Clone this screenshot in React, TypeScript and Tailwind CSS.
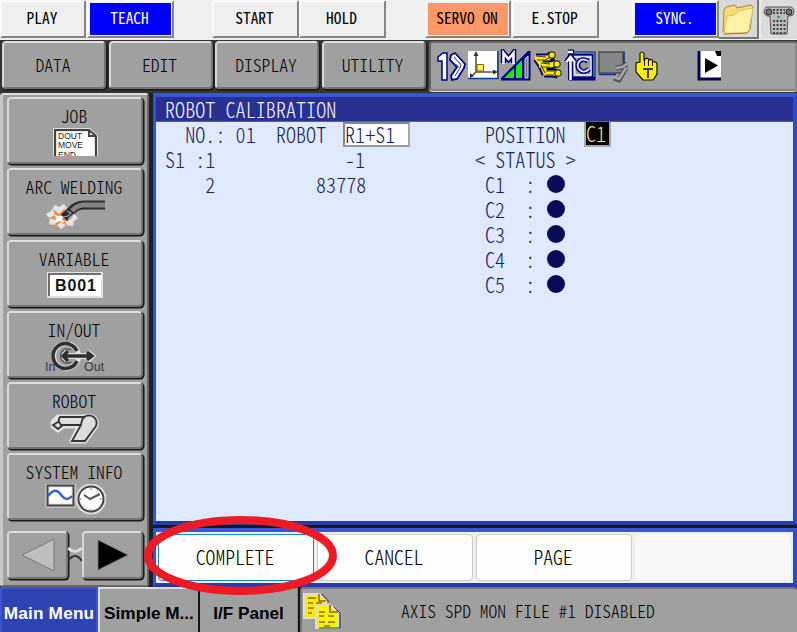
import type { ReactNode } from "react";

const MONO = "font-['Noto_Sans_CJK_JP',monospace] [font-feature-settings:'hwid'] whitespace-pre";

const BEVEL =
  "bg-[#a0a0a0] rounded-[4px] border-2 border-t-[#dedede] border-l-[#d8d8d8] border-r-[#747474] border-b-[#747474] shadow-[1px_1px_0_0.500px_#181818]";

function TopButton({ className, face, children }: { className: string; face?: string; children: ReactNode }) {
  return (
    <div className={`h-[38px] shrink-0 border-t-2 border-l-2 border-r-2 border-b-2 border-t-[#fafafa] border-l-[#fafafa] border-r-[#858585] border-b-[#858585] bg-[#efefef] p-px ${className}`}>
      <div className={`flex h-full items-center justify-center pr-[2px] pb-[2px] text-[15.4px] leading-none ${MONO} ${face ?? ""}`}>{children}</div>
    </div>
  );
}

function MenuButton({ label }: { label: string }) {
  return <div className={`flex h-[48px] w-[104px] shrink-0 items-center justify-center pr-[2px] pb-px text-[17.6px] leading-none ${MONO} font-light ${BEVEL}`}>{label}</div>;
}

function SideButton({ label, children }: { label: string; children: ReactNode }) {
  return (
    <div className={`flex h-[67px] w-[136px] shrink-0 flex-col items-center pt-[6px] ${BEVEL}`}>
      <div className={`mr-[2px] h-[23px] text-[17.6px] leading-[22px] font-light ${MONO}`}>{label}</div>
      <svg width="62" height="31" viewBox="0 0 62 31" fill="none">{children}</svg>
    </div>
  );
}

function SoftKey({ label, active }: { label: string; active?: boolean }) {
  return (
    <div className={`flex h-[47px] w-[156px] shrink-0 items-center justify-center rounded-[4px] border pr-[2px] pb-[2px] text-[19.6px] leading-none font-light ${MONO} ${
      active ? "border-[#1685d9] bg-[#fdfdfd]" : label ? "border-[#cbcbcb] bg-[#fdfdfd]" : "border-[#f4f4f4] bg-[#f8f8f8]"
    }`}><span className="block scale-y-[1.060]">{label}</span></div>
  );
}

function StatusIcons() {
  return (
    <svg width="290" height="34" viewBox="434 48 290 34" fill="none">
      {/* one-step cycle */}
      <path d="M438 56l5-4h4v27h-5V60h-4z" fill="#fff" stroke="#000090" strokeWidth="1.5" />
      <path d="M451 54l4-2 10 11-1 4-7 11-5 1-1-4 6-9-7-7z" fill="#fff" stroke="#000090" strokeWidth="1.8" />
      <path d="M454 56l7 8-1 3-5 8m0-12l4 3" stroke="#4050b0" strokeWidth="1.1" />
      {/* coordinate frame */}
      <path d="M468 50h29v27h-29z" fill="#fff" /><path d="M468 77.5h30V50" stroke="#003c90" strokeWidth="1.5" />
      <path d="M476 54v17h19M476 71l-4 4" stroke="#555" strokeWidth="1.6" />
      <path d="M476 50l2.5 5h-5zM498 71l-5-2.5v5zM470 77v-5l4 3z" fill="#333" />
      <path d="M477 63.5h6.5V70H477z" fill="#ffff50" stroke="#806000" />
      {/* manual speed */}
      <path d="M501 79.5V77l27-27h2.500v29.5z" fill="#000080" />
      <path d="M504 77l10-10v10zM516 65l6-6v18h-6z" fill="#0eef18" />
      <path d="M525 58l3-3v22h-3z" fill="#777" stroke="#ddd" />
      <path d="M503.500 62V52l5 6 5-6v10" stroke="#000080" strokeWidth="5.500" />
      <path d="M503.500 63V52l5 6 5-6v11" stroke="#fff" strokeWidth="2.5" />
      {/* manipulator group */}
      <path d="M536 57h12l4-3m-13 10h12l5-2m-12 10h9l5 1M537 57l5 7 4 9" stroke="#00007c" strokeWidth="9" strokeLinejoin="round" />
      <path d="M535 57h13l4-3m-13 10h12l5-2m-12 10h9l5 1M537 57l5 7 4 9" stroke="#ffe900" strokeWidth="5" strokeLinejoin="round" />
      <path d="M537 59h8l6-3m-10 10h9m-4 8h8m-13-10l4 8M536 55l10 1m-5 6l9 1m-4 7h8" stroke="#4a4400" strokeWidth="1.1" />
      <g fill="#ffe900" stroke="#35350a" strokeWidth="1.2"><circle cx="552" cy="54" r="3.200" /><circle cx="557" cy="63" r="3.2" /><circle cx="558" cy="72" r="3.2" /></g>
      {/* continuous cycle */}
      <path d="M571 52.500h22.500v25H571z" fill="#999" stroke="#000080" strokeWidth="4" />
      <path d="M570 52h24v24" stroke="#4c9aaa" strokeWidth="1.3" />
      <path d="M574 56h17v18h-16z" stroke="#eee" strokeWidth="1.3" />
      <path d="M570.500 79V58m-4 3l4-6 4 6M568 51h6" stroke="#000080" strokeWidth="5" />
      <path d="M570.500 79V58m-4 3l4-5 4 5M568 51h5" stroke="#fff" strokeWidth="2.5" />
      <path d="M588 60c-9-5-13 5-8 9 3 3 7 1 9-1" stroke="#000080" strokeWidth="5" />
      <path d="M588 60c-9-5-13 5-8 9 3 3 7 1 9-1" stroke="#dce8f4" strokeWidth="2" />
      {/* idle display */}
      <path d="M599 51h24v21h-24z" fill="#868686" stroke="#4d4d4d" strokeWidth="1.5" />
      <path d="M599 73.500h17m8-23v14" stroke="#00308a" strokeWidth="1.500" />
      <path d="M616 67l6-1 5-3m-1 4l-7 12-5-2" stroke="#555" strokeWidth="5" /><path d="M616 67l6-1 5-3m-1 4l-7 11-5-2" stroke="#aaa" strokeWidth="2.5" />
      {/* touch pointer */}
      <path d="M640 52.500q2-3 4 0V60l1-2q3-2 4 1 3-2 4 2 4-1 4 3v9l-4 6h-10l-7-8v-9l4-1z" fill="#ffef00" stroke="#111" strokeWidth="1.2" />
      <path d="M644.500 58v7m4-6v6m4-4v4" stroke="#111" /><path d="M643 68h10m-5 0v9" stroke="#403c80" strokeWidth="2" />
      {/* page advance */}
      <path d="M698 50h23v29h-23z" fill="#fff" /><path d="M699 50v28h22" stroke="#000050" strokeWidth="3" /><path d="M715 50h6v5h-4z" fill="#000" />
      <path d="M705 57l13 7.500-13 7.500z" fill="#000" />
    </svg>
  );
}

function Led() {
  return <span className="ml-px block size-[18px] rounded-full bg-[#080c58]" />;
}

/** One screen cell run, stretched to the terminal's tall glyph shape. */
function Cells({ className, children }: { className?: string; children?: ReactNode }) {
  return <span className={`block -translate-y-px scale-y-[1.070] ${className ?? ""}`}>{children}</span>;
}

export default function App() {
  return (
    <div className="relative flex h-[632px] w-[797px] flex-col overflow-hidden bg-[#202020] text-black">
      <header className="flex h-[40px] shrink-0 bg-[#efefef]">
        <TopButton className="w-[86px]">PLAY</TopButton>
        <TopButton className="ml-[1px] w-[87px]" face="bg-[#0000ff] text-white">TEACH</TopButton>
        <TopButton className="ml-[38px] w-[87px]">START</TopButton>
        <TopButton className="w-[87px]">HOLD</TopButton>
        <TopButton className="ml-[39px] w-[86px]" face="bg-[#ff9868]">SERVO ON</TopButton>
        <TopButton className="ml-[1px] w-[87px]">E.STOP</TopButton>
        <TopButton className="ml-[33px] w-[87px]" face="bg-[#0000ff] text-white">SYNC.</TopButton>
        <div className="flex h-[39px] w-[40px] items-center justify-center border-r-2 border-b-2 border-[#777] bg-[#d9d9d9]">
          <svg width="36" height="34" viewBox="0 0 36 34" fill="none">
            <path d="M3 30L4 8l2-3 9-2 2 3 14-3 2 2-3 23-3 3z" fill="#f5db78" stroke="#a98c40" />
            <path d="M4 31L7 14l8-1 3-4 15-3-4 22-2 3z" fill="#fff2a5" stroke="#dfbf5c" />
            <path d="M4 32l23-1 2-2" stroke="#9c7920" />
          </svg>
        </div>
        <div className="flex h-[39px] flex-1 items-center justify-center border-l-2 border-[#eee] bg-[#dcdcdc]">
          <svg width="32" height="32" viewBox="0 0 32 32" fill="none">
            <path d="M3 3h25q3 1 3 5t-4 4h-2l-1 18H8L7 12H4q-3-1-3-5z" fill="#bcbcbc" stroke="#555" />
            <circle cx="6" cy="8" r="3" fill="#777" stroke="#222" /><circle cx="26" cy="8" r="3" fill="#777" stroke="#222" />
            <path d="M10 6h12M10 9h12M10 17h13M10 21h13M10 25h13M10 29h13" stroke="#444" strokeWidth="2" strokeDasharray="2 1.5" />
            <path d="M14 13h3" stroke="#36a765" strokeWidth="2" />
          </svg>
        </div>
      </header>

      <nav className="flex h-[53px] shrink-0 gap-[2.500px] bg-[#343434] pt-[1px] pl-[2px]">
        <MenuButton label="DATA" /><MenuButton label="EDIT" /><MenuButton label="DISPLAY" /><MenuButton label="UTILITY" />
        <div className="ml-[1px] h-[50px] flex-1 rounded-[3px] border-2 border-t-[#666] border-l-[#666] border-r-[#888] border-b-[#858585] bg-[#a0a0a0] pt-[6px] pl-[3px] shadow-[0_1px_0_#ddd]"><StatusIcons /></div>
      </nav>

      <div className="flex h-[494px] shrink-0">
        <aside className="flex w-[149px] shrink-0 flex-col gap-[4.300px] rounded-[3px] border-t-2 border-l-3 border-r-2 border-b-2 border-t-[#dedede] border-l-[#c8c8c8] border-r-[#686868] border-b-[#686868] bg-[#a0a0a0] pt-[2px] pl-[4px]">
          <SideButton label="JOB">
            <path d="M11 28V2h33l8 6v20z" fill="#fff" />
            <path d="M11 28V2h34l7 6v20" stroke="#e0e0e0" strokeWidth="4" />
            <path d="M11 28V2h34l7 6v20M45 2v6h7" stroke="#444" strokeWidth="2" />
            <svg x="12" y="3" width="38" height="25" viewBox="12 3 38 25"><g fill="#222" className="font-['Liberation_Sans',sans-serif] text-[8.500px]"><text x="14" y="11">DOUT</text><text x="14" y="20">MOVE</text><text x="14" y="29.500">END</text></g></svg>
          </SideButton>
          <SideButton label="ARC WELDING">
            <path d="M11 6l4 2 5-3 3 4 6 1 1 5 4 4-4 3-1 5-7-1-5 4-4-4-8-1 1-5-4-5 5-3z" fill="#e6e6e6" stroke="#c8c8c8" />
            <path d="M9 10l6 5 6-6-1 7 9 3-8 2 2 6-6-4-6 5 1-7-7-2 6-3z" fill="#f58b40" />
            <path d="M11 16l4 1 5-1-2 4 3 4-5-2-5 2 1-4z" fill="#fff" />
            <path d="M20 19l6-6q6-7 14-7h21" stroke="#2c2c2c" strokeWidth="9" />
            <path d="M28 12q5-6 12-6h21" stroke="#848484" strokeWidth="5" />
            <path d="M19 18l5-1 3-3-4-2m1 8l6-5" stroke="#aaa" strokeWidth="1.200" />
          </SideButton>
          <SideButton label="VARIABLE">
            <path d="M4 2h54v24H4z" fill="#fff" stroke="#e4e4e4" strokeWidth="2" /><path d="M5 25V3h52" stroke="#444" strokeWidth="1.5" />
            <text x="11" y="19.500" textLength="41" fill="#151515" className="font-['Liberation_Sans',sans-serif] text-[16px] font-bold">B001</text>
          </SideButton>
          <SideButton label="IN/OUT">
            <circle cx="22" cy="14" r="12.500" stroke="#dedede" strokeWidth="5" />
            <path d="M20 14h28m-24-5l-5 5 5 5m19-9l5 4-5 5" stroke="#ddd" strokeWidth="6" />
            <path d="M33 9a12.500 12.500 0 1 0 0 10" stroke="#303030" strokeWidth="3.600" />
            <path d="M27 8a7 7 0 1 0 0 12" stroke="#555" strokeWidth="1.500" />
            <path d="M20 14h28m-24-5l-5 5 5 5m19-9l5 4-5 4" stroke="#303030" strokeWidth="3.400" />
            <g fill="#383838" className="font-['Liberation_Sans',sans-serif] text-[12.500px]"><text x="1" y="29">In</text><text x="40" y="29">Out</text></g>
          </SideButton>
          <SideButton label="ROBOT">
            <g stroke="#e2e2e2" strokeWidth="5" strokeLinejoin="round">
              <path d="M14 4h28v9H19l-5 4-5-4v-4z" /><path d="M39 6a7.500 7.500 0 0 1 13 7L41 28H28z" />
            </g>
            <path d="M14 9l-5 3 5 4 5-4M16 4h28v8H17q-4-4-1-8z" fill="#ddd" stroke="#333" strokeWidth="1.800" />
            <path d="M38 7a7.500 7.500 0 0 1 14 6L41 28H28l9-16z" fill="#dcdcdc" stroke="#333" strokeWidth="1.800" />
          </SideButton>
          <SideButton label="SYSTEM INFO">
            <path d="M3.500 1.500h26v20h-26z" fill="#fff" stroke="#ddd" strokeWidth="4" /><path d="M3.500 1.500h26v20h-26z" stroke="#444" strokeWidth="2" />
            <path d="M4 12c6-8 10-6 14 0q5 6 10 0" stroke="#2d60d4" strokeWidth="2.500" />
            <circle cx="47" cy="15" r="14" fill="#fff" stroke="#ddd" strokeWidth="3" /><circle cx="47" cy="15" r="12.500" stroke="#444" strokeWidth="2" />
            <path d="M40 11l6 4 10-5" stroke="#555" strokeWidth="2" /><path d="M47 4v2m0 19v2M36 15h2m18 0h2" stroke="#888" />
          </SideButton>
          <div className="mt-[6px] flex items-center">
            <div className={`flex h-[48px] w-[61px] items-center justify-center ${BEVEL}`}><svg width="34" height="36"><path d="M33 2v32L1 18z" fill="#bebebe" stroke="#747474" /></svg></div>
            <svg width="14" height="20" viewBox="0 0 14 20" fill="none"><path d="M0 3q7 7 14 0" stroke="#ddd" strokeWidth="3" /><path d="M0 16q7-10 14 0" stroke="#333" strokeWidth="2" /></svg>
            <div className={`flex h-[48px] w-[61px] items-center justify-center ${BEVEL}`}><svg width="32" height="34"><path d="M1 2v30l30-15z" fill="#000" stroke="#777" /></svg></div>
          </div>
        </aside>
        <main className="ml-[4px] flex flex-1 flex-col gap-[3px] bg-[#101c20]">
          <section className={`h-[432px] border-t-4 border-r-4 border-b-4 border-l-3 border-t-[#3855dc] border-l-[#3551de] border-r-[#3048cb] border-b-[#283ba4] bg-[#dfeaff] text-[20px] leading-[25px] font-light tracking-[0.080px] text-[#171d65] ${MONO}`}>
            <div className="h-[25px] border-b border-[#5660ba] bg-[#283092] pl-[9px] text-[#f3f5ff]"><Cells>ROBOT CALIBRATION</Cells></div>
            <div className="flex h-[25px]">
              <div className="w-[187px] pl-[9px]"><Cells>{"  NO.: 01  ROBOT"}</Cells></div>
              <div className="h-[25px] w-[67px] border-2 border-t-[#888] border-l-[#888] border-r-[#aaa] border-b-[#999] bg-white leading-[21px]"><Cells>R1+S1</Cells></div>
              <div className="w-[174px] pl-[75px]"><Cells>POSITION</Cells></div>
              <div className="h-[25px] w-[27px] border-r-2 border-b-2 border-l-2 border-[#aaa] bg-black leading-[24px] text-[#eee98e]"><Cells>C1</Cells></div>
            </div>
            <div className="flex h-[25px] pl-[9px]"><Cells className="w-[180px]">S1 :1</Cells><Cells className="w-[130px]">-1</Cells><Cells>{"< STATUS >"}</Cells></div>
            {["C1", "C2", "C3", "C4", "C5"].map((name, i) => (
              <div key={name} className="flex h-[25px] items-start pl-[9px]">
                <Cells className="w-[151px]">{i === 0 ? "    2" : ""}</Cells><Cells className="w-[169px]">{i === 0 ? "83778" : ""}</Cells>
                <Cells className="w-[61px]">{name}{"  :"}</Cells><span className="pt-[3px]"><Led /></span>
              </div>
            ))}
          </section>
          <section className="flex h-[59px] gap-[3px] border-t-4 border-r-4 border-b-4 border-l-3 border-t-[#3855dc] border-l-[#3551de] border-r-[#3048cb] border-b-[#283ba4] bg-[#eeeeee] pt-[2px] pl-[2px]">
            <SoftKey label="COMPLETE" active /><SoftKey label="CANCEL" /><SoftKey label="PAGE" /><SoftKey label="" />
          </section>
        </main>
      </div>

      <footer className="flex h-[45px] shrink-0 bg-[#151515] font-['Liberation_Sans',sans-serif] text-[17.200px] font-bold whitespace-nowrap">
        <div className="flex w-[98px] items-center justify-center border-t-2 border-r-2 border-l-2 border-[#3e54cd] bg-[#3043b2] pt-[6px] text-white"><span className="tracking-[0.200px]">Main Menu</span></div>
        <div className="flex w-[100px] items-center justify-center border-t-2 border-l-2 border-[#ddd] bg-[#a0a0a0] pt-[6px]">Simple M...</div>
        <div className="ml-[2px] flex w-[98px] items-center justify-center border-t-2 border-r border-[#888] bg-[#a0a0a0] pt-[6px]">I/F Panel</div>
        <div className="ml-[2px] flex flex-1 items-center rounded-t-[3px] border-t-2 border-l-2 border-[#777] bg-[#a0a0a0]">
          <svg width="39" height="39" viewBox="0 0 39 39" fill="none">
            <path d="M2 3h15l7 7v17H2z" fill="#ffeb00" stroke="#ddd" strokeWidth="2" /><path d="M17 3v7h7M6 7h8M6 12h5m3 0h6M6 17h6M6 22h4" stroke="#8a7000" strokeWidth="1.5" />
            <path d="M14 14h14l8 7v16H14z" fill="#fff000" stroke="#ddd" strokeWidth="2" /><path d="M28 14v7h8M17 21h6m3 4h6M17 25h5m-5 6h6m3 0h7m-11 4h6" stroke="#8a7000" strokeWidth="1.7" /><path d="M20 3l7 8M32 16l6 6v15H17" stroke="#333" />
          </svg>
          <div className={`ml-[60px] text-[17.500px] leading-none font-light ${MONO}`}>AXIS SPD MON FILE #1 DISABLED</div>
        </div>
      </footer>

      {/* Highlight ring over the COMPLETE key */}
      <svg className="pointer-events-none absolute top-[510px] left-[140px]" width="202" height="90" fill="none"><ellipse cx="100.500" cy="45.500" rx="92.500" ry="35.500" stroke="#ed1c24" strokeWidth="8" /></svg>
    </div>
  );
}
